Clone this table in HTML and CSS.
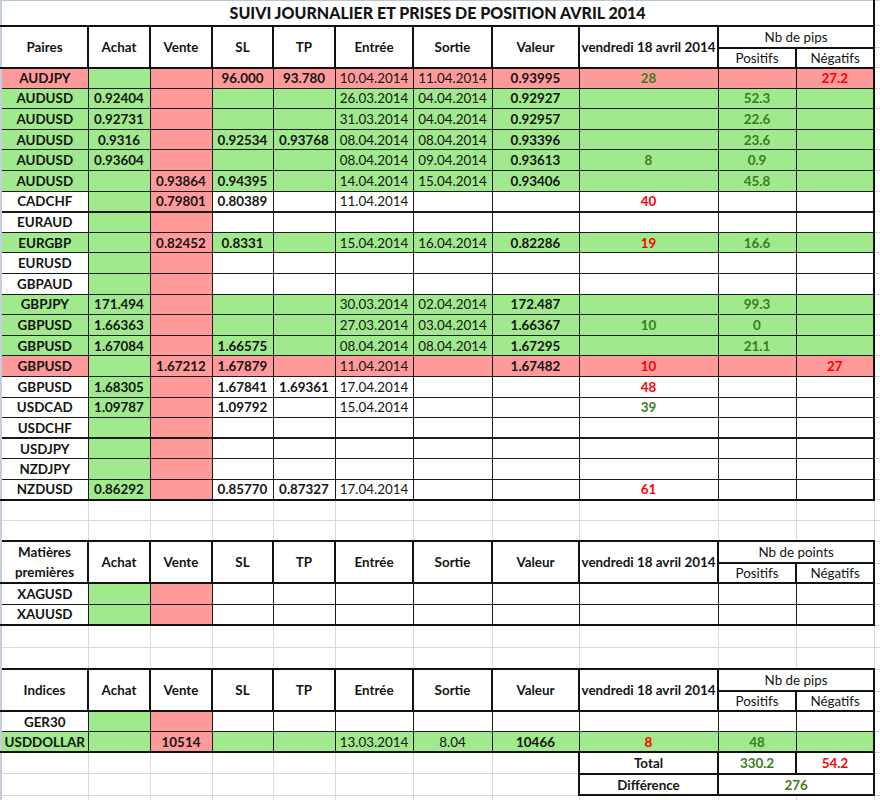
FILE: index.html
```html
<!DOCTYPE html>
<html lang="fr">
<head>
<meta charset="utf-8">
<title>Suivi journalier</title>
<link rel="stylesheet" href="styles.css">
</head>
<body>
<table class="sheet">
<colgroup>
<col class="w1"><col class="w2"><col class="w3"><col class="w4"><col class="w5"><col class="w6"><col class="w7"><col class="w8"><col class="w9"><col class="w10"><col class="w11"><col class="w12">
</colgroup>
<tbody>
<tr class="title"><td class="p ttl" colspan="11">SUIVI JOURNALIER ET PRISES DE POSITION AVRIL 2014</td><td class="x"></td></tr>
<tr class="hd h1"><td class="p" rowspan="2">Paires</td><td rowspan="2">Achat</td><td rowspan="2">Vente</td><td rowspan="2">SL</td><td rowspan="2">TP</td><td rowspan="2">Entrée</td><td rowspan="2">Sortie</td><td rowspan="2">Valeur</td><td rowspan="2">vendredi 18 avril 2014</td><td class="n" colspan="2">Nb de pips</td><td class="x"></td></tr>
<tr class="hd h2"><td class="n">Positifs</td><td class="n">Négatifs</td><td class="x"></td></tr>

<tr class="d R"><td class="p">AUDJPY</td><td class="g"></td><td></td><td>96.000</td><td>93.780</td><td class="n">10.04.2014</td><td class="n">11.04.2014</td><td>0.93995</td><td class="cg">28</td><td></td><td class="cr">27.2</td><td class="x"></td></tr>
<tr class="d G"><td class="p">AUDUSD</td><td>0.92404</td><td class="r"></td><td></td><td></td><td class="n">26.03.2014</td><td class="n">04.04.2014</td><td>0.92927</td><td></td><td class="cg">52.3</td><td></td><td class="x"></td></tr>
<tr class="d G"><td class="p">AUDUSD</td><td>0.92731</td><td class="r"></td><td></td><td></td><td class="n">31.03.2014</td><td class="n">04.04.2014</td><td>0.92957</td><td></td><td class="cg">22.6</td><td></td><td class="x"></td></tr>
<tr class="d G"><td class="p">AUDUSD</td><td>0.9316</td><td class="r"></td><td>0.92534</td><td>0.93768</td><td class="n">08.04.2014</td><td class="n">08.04.2014</td><td>0.93396</td><td></td><td class="cg">23.6</td><td></td><td class="x"></td></tr>
<tr class="d G"><td class="p">AUDUSD</td><td>0.93604</td><td class="r"></td><td></td><td></td><td class="n">08.04.2014</td><td class="n">09.04.2014</td><td>0.93613</td><td class="cg">8</td><td class="cg">0.9</td><td></td><td class="x"></td></tr>
<tr class="d G"><td class="p">AUDUSD</td><td></td><td class="r">0.93864</td><td>0.94395</td><td></td><td class="n">14.04.2014</td><td class="n">15.04.2014</td><td>0.93406</td><td></td><td class="cg">45.8</td><td></td><td class="x"></td></tr>
<tr class="d"><td class="p">CADCHF</td><td class="g"></td><td class="r">0.79801</td><td>0.80389</td><td></td><td class="n">11.04.2014</td><td></td><td></td><td class="cr">40</td><td></td><td></td><td class="x"></td></tr>
<tr class="d tk"><td class="p">EURAUD</td><td class="g"></td><td class="r"></td><td></td><td></td><td></td><td></td><td></td><td></td><td></td><td></td><td class="x"></td></tr>
<tr class="d G"><td class="p">EURGBP</td><td></td><td class="r">0.82452</td><td>0.8331</td><td></td><td class="n">15.04.2014</td><td class="n">16.04.2014</td><td>0.82286</td><td class="cr">19</td><td class="cg">16.6</td><td></td><td class="x"></td></tr>
<tr class="d"><td class="p">EURUSD</td><td class="g"></td><td class="r"></td><td></td><td></td><td></td><td></td><td></td><td></td><td></td><td></td><td class="x"></td></tr>
<tr class="d"><td class="p">GBPAUD</td><td class="g"></td><td class="r"></td><td></td><td></td><td></td><td></td><td></td><td></td><td></td><td></td><td class="x"></td></tr>
<tr class="d G"><td class="p">GBPJPY</td><td>171.494</td><td class="r"></td><td></td><td></td><td class="n">30.03.2014</td><td class="n">02.04.2014</td><td>172.487</td><td></td><td class="cg">99.3</td><td></td><td class="x"></td></tr>
<tr class="d G"><td class="p">GBPUSD</td><td>1.66363</td><td class="r"></td><td></td><td></td><td class="n">27.03.2014</td><td class="n">03.04.2014</td><td>1.66367</td><td class="cg">10</td><td class="cg">0</td><td></td><td class="x"></td></tr>
<tr class="d G"><td class="p">GBPUSD</td><td>1.67084</td><td class="r"></td><td>1.66575</td><td></td><td class="n">08.04.2014</td><td class="n">08.04.2014</td><td>1.67295</td><td></td><td class="cg">21.1</td><td></td><td class="x"></td></tr>
<tr class="d R"><td class="p">GBPUSD</td><td class="g"></td><td>1.67212</td><td>1.67879</td><td></td><td class="n">11.04.2014</td><td></td><td>1.67482</td><td class="cr">10</td><td></td><td class="cr">27</td><td class="x"></td></tr>
<tr class="d"><td class="p">GBPUSD</td><td class="g">1.68305</td><td class="r"></td><td>1.67841</td><td>1.69361</td><td class="n">17.04.2014</td><td></td><td></td><td class="cr">48</td><td></td><td></td><td class="x"></td></tr>
<tr class="d"><td class="p">USDCAD</td><td class="g">1.09787</td><td class="r"></td><td>1.09792</td><td></td><td class="n">15.04.2014</td><td></td><td></td><td class="cg">39</td><td></td><td></td><td class="x"></td></tr>
<tr class="d"><td class="p">USDCHF</td><td class="g"></td><td class="r"></td><td></td><td></td><td></td><td></td><td></td><td></td><td></td><td></td><td class="x"></td></tr>
<tr class="d tk"><td class="p">USDJPY</td><td class="g"></td><td class="r"></td><td></td><td></td><td></td><td></td><td></td><td></td><td></td><td></td><td class="x"></td></tr>
<tr class="d"><td class="p">NZDJPY</td><td class="g"></td><td class="r"></td><td></td><td></td><td></td><td></td><td></td><td></td><td></td><td></td><td class="x"></td></tr>
<tr class="d last"><td class="p">NZDUSD</td><td class="g">0.86292</td><td class="r"></td><td>0.85770</td><td>0.87327</td><td class="n">17.04.2014</td><td></td><td></td><td class="cr">61</td><td></td><td></td><td class="x"></td></tr>

<tr class="e"><td class="p"></td><td></td><td></td><td></td><td></td><td></td><td></td><td></td><td></td><td></td><td></td><td class="x"></td></tr>
<tr class="e"><td class="p"></td><td></td><td></td><td></td><td></td><td></td><td></td><td></td><td></td><td></td><td></td><td class="x"></td></tr>

<tr class="hd h1 m1"><td class="p wrap" rowspan="2">Matières premières</td><td rowspan="2">Achat</td><td rowspan="2">Vente</td><td rowspan="2">SL</td><td rowspan="2">TP</td><td rowspan="2">Entrée</td><td rowspan="2">Sortie</td><td rowspan="2">Valeur</td><td rowspan="2">vendredi 18 avril 2014</td><td class="n" colspan="2">Nb de points</td><td class="x"></td></tr>
<tr class="hd h2 m2"><td class="n">Positifs</td><td class="n">Négatifs</td><td class="x"></td></tr>
<tr class="d dm"><td class="p">XAGUSD</td><td class="g"></td><td class="r"></td><td></td><td></td><td></td><td></td><td></td><td></td><td></td><td></td><td class="x"></td></tr>
<tr class="d dm last"><td class="p">XAUUSD</td><td class="g"></td><td class="r"></td><td></td><td></td><td></td><td></td><td></td><td></td><td></td><td></td><td class="x"></td></tr>

<tr class="e e2"><td class="p"></td><td></td><td></td><td></td><td></td><td></td><td></td><td></td><td></td><td></td><td></td><td class="x"></td></tr>
<tr class="e e2"><td class="p"></td><td></td><td></td><td></td><td></td><td></td><td></td><td></td><td></td><td></td><td></td><td class="x"></td></tr>

<tr class="hd h1 i1"><td class="p" rowspan="2">Indices</td><td rowspan="2">Achat</td><td rowspan="2">Vente</td><td rowspan="2">SL</td><td rowspan="2">TP</td><td rowspan="2">Entrée</td><td rowspan="2">Sortie</td><td rowspan="2">Valeur</td><td rowspan="2">vendredi 18 avril 2014</td><td class="n" colspan="2">Nb de pips</td><td class="x"></td></tr>
<tr class="hd h2 i2"><td class="n">Positifs</td><td class="n">Négatifs</td><td class="x"></td></tr>
<tr class="d"><td class="p">GER30</td><td class="g"></td><td class="r"></td><td></td><td></td><td></td><td></td><td></td><td></td><td></td><td></td><td class="x"></td></tr>
<tr class="d G last"><td class="p wh">USDDOLLAR</td><td></td><td class="r">10514</td><td></td><td></td><td class="n">13.03.2014</td><td class="n">8.04</td><td>10466</td><td class="cr">8</td><td class="cg">48</td><td></td><td class="x"></td></tr>
<tr class="t"><td class="p"></td><td></td><td></td><td></td><td></td><td></td><td></td><td></td><td class="tb">Total</td><td class="tb cg">330.2</td><td class="tb cr">54.2</td><td class="x"></td></tr>
<tr class="t"><td class="p"></td><td></td><td></td><td></td><td></td><td></td><td></td><td></td><td class="tb">Différence</td><td class="tb cg" colspan="2">276</td><td class="x"></td></tr>
<tr class="e"><td class="p"></td><td></td><td></td><td></td><td></td><td></td><td></td><td></td><td></td><td></td><td></td><td class="x"></td></tr>
</tbody>
</table>
</body>
</html>
```

FILE: styles.css
```css
html, body {
  margin: 0;
  padding: 0;
  background: #ffffff;
}

.sheet {
  border-collapse: collapse;
  table-layout: fixed;
  width: 880px;
  font-family: Lato, "Liberation Sans", sans-serif;
  font-size: 13.4px;
  color: #141414;
}

.w1 { width: 87px; }
.w2 { width: 62px; }
.w3 { width: 62px; }
.w4 { width: 61px; }
.w5 { width: 62px; }
.w6 { width: 78px; }
.w7 { width: 79px; }
.w8 { width: 87px; }
.w9 { width: 139px; }
.w10 { width: 78px; }
.w11 { width: 78px; }
.w12 { width: 7px; }

.sheet td {
  border: 1px solid #d9d9d9;
  padding: 0;
  text-align: center;
  vertical-align: middle;
  white-space: nowrap;
  overflow: hidden;
  font-weight: 700;
  line-height: 16px;
}

.sheet tr { height: 20.6px; }

/* title */
.sheet tr.title { height: 25px; }
.sheet tr.title td {
  border-top: 1px solid #b8c4d5;
  font-size: 16px;
  font-weight: 900;
  border-bottom: 2px solid #111;
}
.sheet td.ttl { border-right: 2px solid #111; }

/* headers */
.sheet tr.h1 { height: 22px; }
.sheet tr.h2 { height: 20px; }
.sheet tr.hd td {
  border: 2px solid #111;
}

/* data rows */
.sheet tr.d td { border-color: #1c1c1c; }
.sheet tr.d td:nth-child(11) { border-right: 2px solid #111; }
.sheet tr.tk td { border-top-width: 2px; }
.sheet tr.last td { border-bottom: 2px solid #111; }
.sheet tr.dm { height: 21px; }
.sheet tr.e2 { height: 22px; }

.sheet tr.G td { background: #a0e98c; }
.sheet tr.R td { background: #ff9a9a; }
.sheet tr td.g { background: #a0e98c; }
.sheet tr td.r { background: #ff9a9a; }

/* totals */
.sheet tr.t { height: 21.5px; }
.sheet tr td.tb { border: 2px solid #111; }

/* first column and filler column */
.sheet tr td.p { border-left: 2px solid #c5cedb; }
.sheet tr td.x {
  background: #ffffff;
  border-top-color: #d9d9d9;
  border-bottom-color: #d9d9d9;
  border-right-color: #d9d9d9;
  border-top-width: 1px;
  border-bottom-width: 1px;
  border-right-width: 1px;
}

.sheet td.n { font-weight: 400; }
.sheet td.cg { color: #3a7d22; }
.sheet td.cr { color: #ff0000; }

.sheet td.wrap {
  white-space: normal;
  line-height: 20px;
}
```
